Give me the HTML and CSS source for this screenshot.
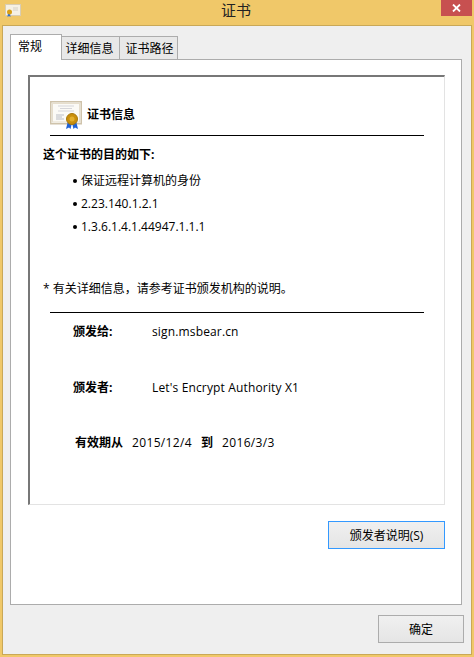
FILE: index.html
```html
<!DOCTYPE html>
<html>
<head>
  <title>证书</title>
  <meta charset="UTF-8">
  <link rel="stylesheet" href="styles.css">
</head>
<body>
  <div class="window">
    <div class="title-bar">
      <svg class="title-icon" width="16" height="14" viewBox="0 0 16 14">
        <rect x="0.5" y="0.5" width="15" height="11" fill="#f6f1e4" stroke="#d8cdb4"/>
        <path d="M8 4h5M8 6h5" stroke="#d5d0c4"/>
        <path d="M3 9l-.5 4 1.500-1 1.500 1L5 9z" fill="#2f6fd0"/>
        <circle cx="4.500" cy="8" r="2.500" fill="#d9a016"/>
      </svg>
      <span class="title-text">证书</span>
      <div class="close-btn">
        <svg width="9" height="8" viewBox="0 0 9 8">
          <path d="M1 0.500l7 7M8 0.500l-7 7" stroke="#fff" stroke-width="1.800"/>
        </svg>
      </div>
    </div>

    <div class="client">
      <div class="tabs">
        <div class="tab active">常规</div>
        <div class="tab tab-details">详细信息</div>
        <div class="tab tab-path">证书路径</div>
      </div>

      <div class="tab-panel">
        <div class="cert-box">
          <div class="cert-header">
            <svg class="cert-icon" width="32" height="28" viewBox="0 0 32 28">
              <rect x="0.750" y="0.750" width="30.500" height="22" fill="#fbfaf6" stroke="#cfc3ab" stroke-width="1.500"/>
              <rect x="2.500" y="2.500" width="27" height="18.500" fill="none" stroke="#e6decd"/>
              <path d="M8 5h16M10 7.500h12M8 10h16" stroke="#d6d6da"/>
              <path d="M6 14h8M6 16h6M6 18h8" stroke="#b9bcc4"/>
              <path d="M18 20l-2 8 3-1.500 1.500 1.500 1.500-6z" fill="#1f62d6"/>
              <path d="M26 20l2 8-3-1.500-1.500 1.500-1.500-6z" fill="#1f62d6"/>
              <circle cx="22" cy="18" r="5.500" fill="#c98f0c" stroke="#a9780a"/>
              <circle cx="22" cy="18" r="2.500" fill="#e3af2c"/>
            </svg>
            <span class="cert-heading">证书信息</span>
          </div>
          <div class="rule"></div>

          <div class="purpose-title">这个证书的目的如下:</div>
          <ul class="purpose-list">
            <li>保证远程计算机的身份</li>
            <li>2.23.140.1.2.1</li>
            <li>1.3.6.1.4.1.44947.1.1.1</li>
          </ul>
          <div class="note">* 有关详细信息，请参考证书颁发机构的说明。</div>
          <div class="rule"></div>

          <div class="info-row first">
            <span class="info-label">颁发给:</span>
            <span class="info-value">sign.msbear.cn</span>
          </div>
          <div class="info-row">
            <span class="info-label">颁发者:</span>
            <span class="info-value">Let's Encrypt Authority X1</span>
          </div>
          <div class="valid-row">
            <span class="info-label">有效期从</span>
            <span class="date-value">2015/12/4</span>
            <span class="info-label">到</span>
            <span class="date-value">2016/3/3</span>
          </div>
        </div>

        <div class="panel-actions">
          <button class="btn focused">颁发者说明(S)</button>
        </div>
      </div>

      <div class="footer">
        <button class="btn ok-btn">确定</button>
      </div>
    </div>
  </div>
</body>
</html>
```

FILE: styles.css
```css
html, body {
  margin: 0;
  padding: 0;
}

body {
  width: 474px;
  height: 657px;
  overflow: hidden;
  font-family: "Open Sans", "Noto Sans CJK SC", sans-serif;
  font-size: 12px;
  line-height: 18px;
  color: #000;
}

.window {
  display: flex;
  flex-direction: column;
  box-sizing: border-box;
  width: 474px;
  height: 657px;
  background-color: #f0c869;
  padding: 0 2px 2px 2px;
}

.title-bar {
  position: relative;
  height: 25px;
  flex-shrink: 0;
  padding-right: 2px;
  text-align: center;
  font-size: 15px;
  line-height: 20px;
  color: #222;
}

.title-icon {
  position: absolute;
  left: 3px;
  top: 4px;
}

.close-btn {
  position: absolute;
  right: 0;
  top: 0;
  width: 31px;
  height: 16px;
  background-color: #c75050;
  display: flex;
  align-items: center;
  justify-content: center;
}

.client {
  flex: 1;
  display: flex;
  flex-direction: column;
  background-color: #efefef;
  border: 1px solid #c9a857;
  padding: 8px 7px 0 7px;
}

.tabs {
  display: flex;
  align-items: flex-end;
  height: 26px;
  position: relative;
  z-index: 1;
  margin-bottom: -1px;
}

.tab {
  box-sizing: border-box;
  width: 58px;
  height: 24px;
  margin-top: 2px;
  background-color: #e8e8e8;
  border: 1px solid #acacac;
  border-left: none;
  text-align: center;
  line-height: 23px;
}

.tab-details {
  padding-right: 2px;
}

.tab-path {
  padding-left: 2px;
}

.tab.active {
  width: 52px;
  height: 26px;
  margin-top: 0;
  padding-right: 12px;
  background-color: #fff;
  border-left: 1px solid #acacac;
  border-bottom: none;
  line-height: 23px;
}

.tab-panel {
  box-sizing: border-box;
  width: 452px;
  height: 546px;
  background-color: #fff;
  border: 1px solid #acacac;
  padding: 15px 16px 0 17px;
}

.cert-box {
  box-sizing: border-box;
  height: 430px;
  border-top: 2px solid #777;
  border-left: 2px solid #777;
  border-right: 1px solid #e3e3e3;
  border-bottom: 1px solid #e3e3e3;
  padding: 24px 20px 0 20px;
}

.cert-header {
  display: flex;
  align-items: center;
  height: 28px;
  margin-bottom: 6px;
}

.cert-icon {
  flex-shrink: 0;
}

.cert-heading {
  margin-left: 5px;
  font-weight: 700;
}

.rule {
  width: 374px;
  height: 1px;
  background-color: #000;
}

.purpose-title {
  margin: 10px 0 0 -7px;
  font-weight: 700;
}

.purpose-list {
  list-style: none;
  margin: 8px 0 0 0;
  padding: 0 0 0 31px;
}

.purpose-list li {
  position: relative;
  height: 23px;
}

.purpose-list li:before {
  content: "";
  position: absolute;
  left: -8px;
  top: 7px;
  width: 4px;
  height: 4px;
  border-radius: 50%;
  background-color: #000;
}

.note {
  margin: 39px 0 14px -7px;
}

.info-row {
  display: flex;
  margin-top: 38px;
  padding-left: 23px;
}

.info-row.first {
  margin-top: 10px;
}

.info-row .info-label {
  width: 79px;
}

.info-label {
  font-weight: 700;
}

.info-value {
  letter-spacing: 0.15px;
}

.date-value {
  letter-spacing: 0.35px;
}

.valid-row {
  display: flex;
  margin-top: 37px;
  padding-left: 25px;
  column-gap: 9px;
}

.panel-actions {
  display: flex;
  justify-content: flex-end;
  margin-top: 16px;
}

.btn {
  box-sizing: border-box;
  width: 117px;
  height: 28px;
  padding: 0;
  background: linear-gradient(#f0f0f0, #e5e5e5);
  border: 1px solid #acacac;
  font-family: inherit;
  font-size: 12px;
  color: #000;
}

.btn.focused {
  border-color: #3399ff;
}

.footer {
  display: flex;
  justify-content: flex-end;
  margin-top: 10px;
}

.ok-btn {
  width: 86px;
}
```
